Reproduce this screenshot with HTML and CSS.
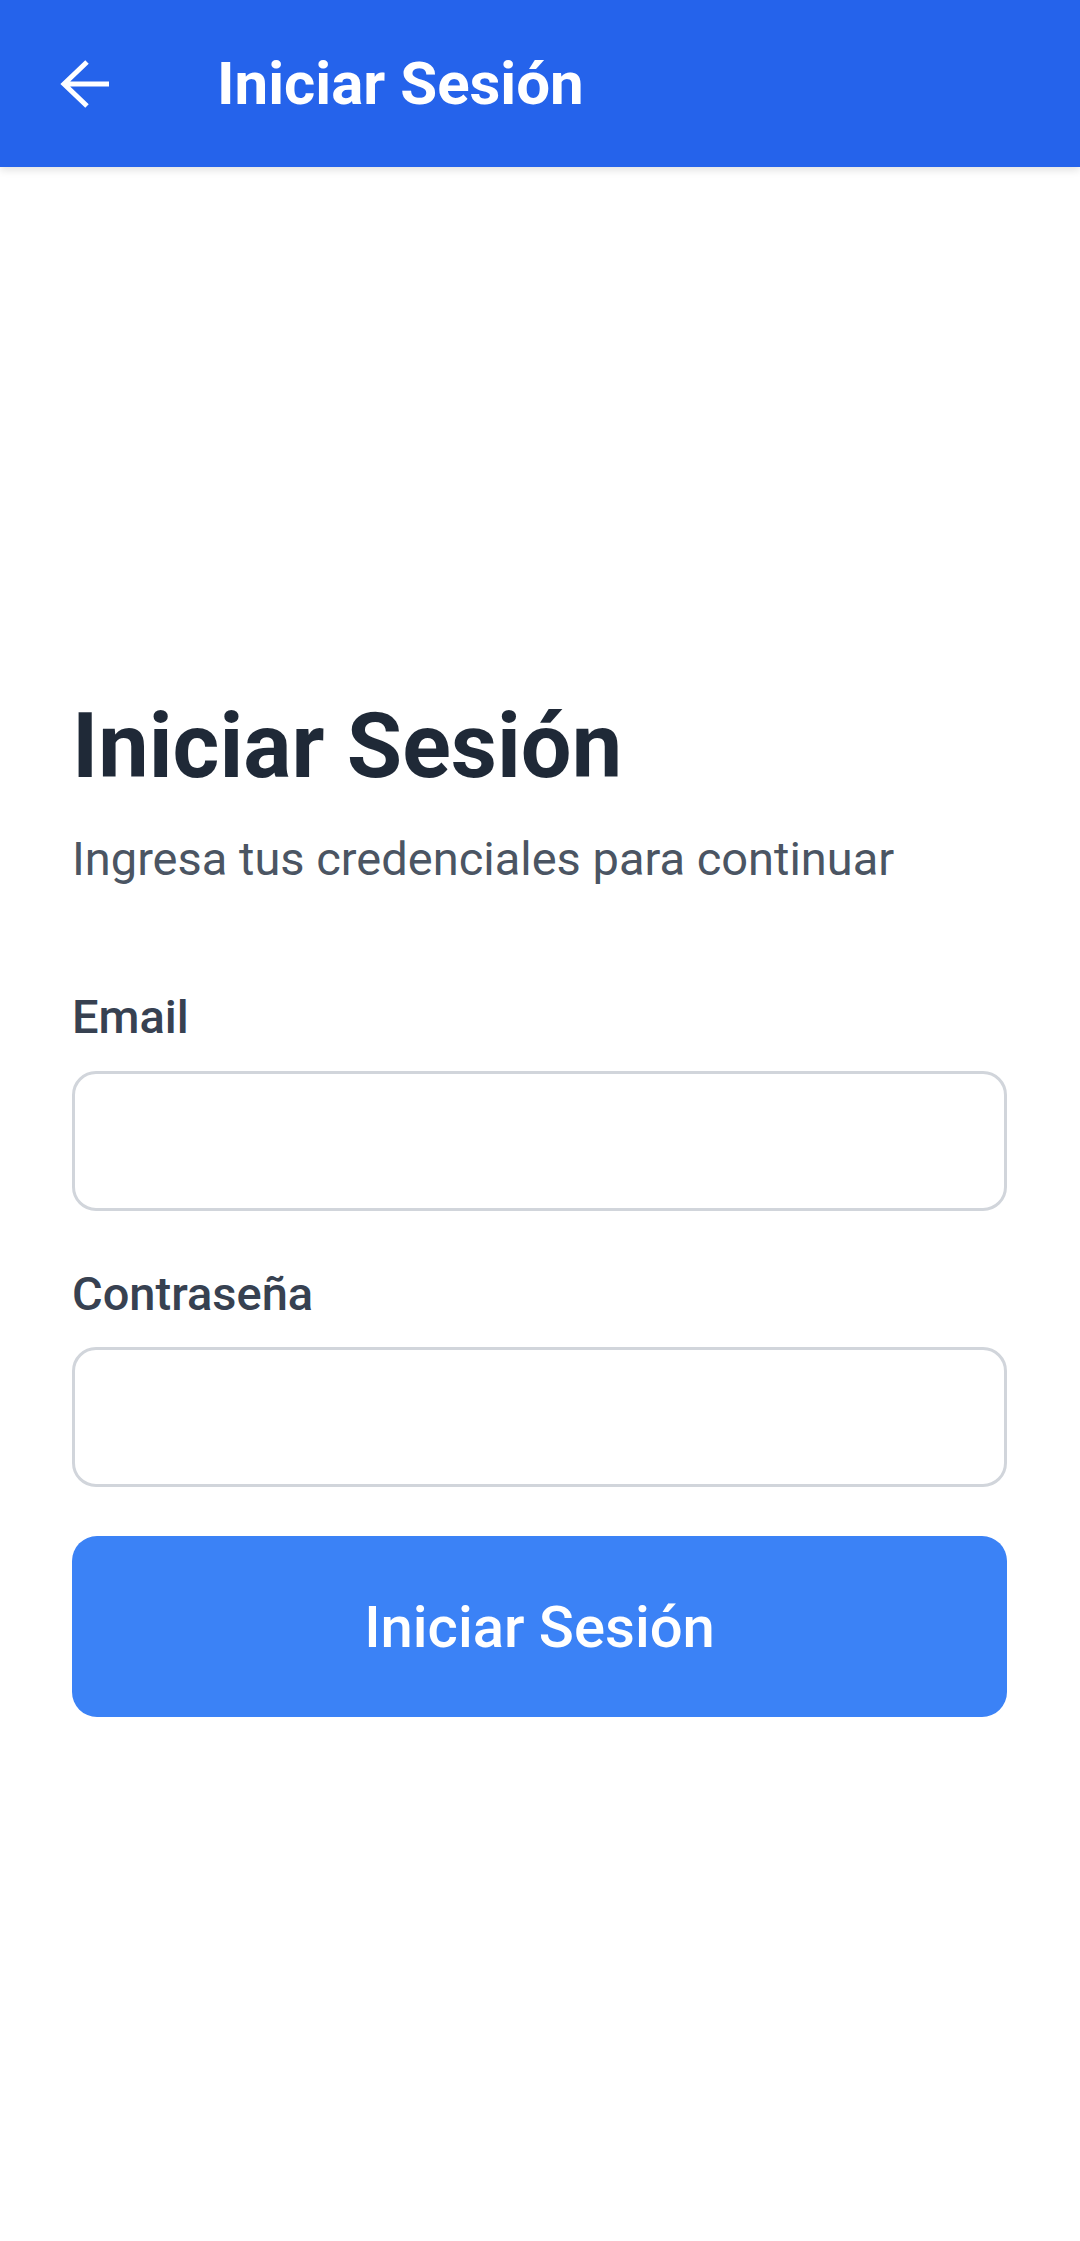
FILE: index.html
```html
<!DOCTYPE html>
<html lang="es">
<head>
<meta charset="utf-8">
<title>Iniciar Sesión</title>
<link rel="stylesheet" href="styles.css">
</head>
<body>
<header class="appbar">
  <button class="back" aria-label="Atrás">
    <svg viewBox="0 0 50 50" width="50" height="50"><path d="M4 25H49M27 3L4 25L27 47" fill="none" stroke="#fff" stroke-width="5" stroke-linejoin="miter"/></svg>
  </button>
  <h1 class="appbar-title">Iniciar Sesión</h1>
</header>
<main class="main">
  <section class="form">
    <h2 class="heading">Iniciar Sesión</h2>
    <p class="subtitle">Ingresa tus credenciales para continuar</p>
    <label class="label label-first">Email</label>
    <div class="input"></div>
    <label class="label">Contraseña</label>
    <div class="input"></div>
    <button class="submit">Iniciar Sesión</button>
  </section>
</main>
</body>
</html>
```
FILE: styles.css
```css
* { box-sizing: border-box; }
html, body { margin: 0; padding: 0; }
body {
  width: 1080px;
  height: 2241px;
  background: #ffffff;
  font-family: Roboto, "Noto Sans", sans-serif;
  overflow: hidden;
}
.appbar {
  height: 167px;
  background: #2563EB;
  display: flex;
  align-items: center;
  box-shadow: 0 3px 8px rgba(0,0,0,0.12);
  position: relative;
  z-index: 1;
}
.back {
  background: none;
  border: 0;
  padding: 0;
  margin-left: 60px;
  width: 50px;
  height: 50px;
  display: flex;
}
.appbar-title {
  margin: 0 0 0 107px;
  color: #fff;
  font-size: 60px;
  font-weight: 700;
}
.main {
  padding: 526px 73px 0 72px;
}
.form { display: flex; flex-direction: column; }
.heading {
  margin: 0;
  font-size: 90px;
  line-height: 108px;
  font-weight: 700;
  color: #1F2937;
}
.subtitle {
  margin: 30px 0 0;
  font-size: 47px;
  line-height: 56px;
  color: #4B5563;
}
.label {
  margin: 55px 0 25px;
  font-size: 47px;
  line-height: 56px;
  font-weight: 500;
  color: #374151;
}
.label-first { margin-top: 102px; margin-bottom: 26px; }
.input {
  height: 140px;
  border: 3px solid #D1D5DB;
  border-radius: 24px;
  background: #fff;
}
.submit {
  margin-top: 49px;
  height: 181px;
  border: 0;
  border-radius: 25px;
  background: #3B82F6;
  color: #fff;
  font-family: Roboto, sans-serif;
  font-size: 58px;
  font-weight: 500;
}
```
